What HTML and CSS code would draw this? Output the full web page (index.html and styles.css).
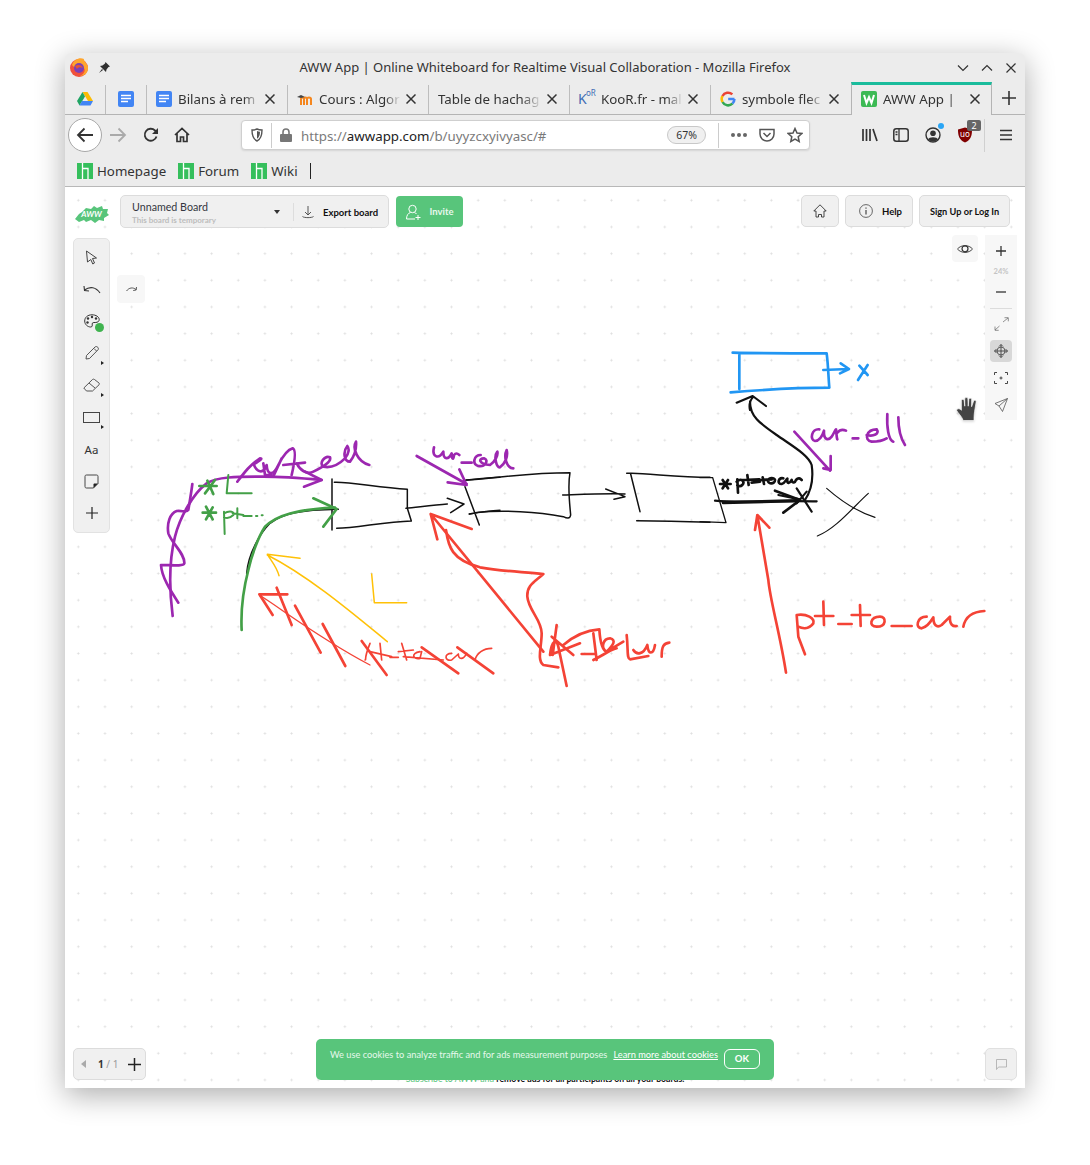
FILE: index.html
```html
<!DOCTYPE html>
<html lang="en">
<head>
<meta charset="utf-8">
<title>AWW App</title>
<link rel="stylesheet" href="styles.css">
</head>
<body>
<div class="window">
  <header class="titlebar">
    <div class="title-left">
      <svg class="ff" width="20" height="20" viewBox="0 0 20 20"><circle cx="10" cy="11" r="9" fill="#f0503c"/><path d="M3 8C5 2 11 0 15 2c-1 1 3 4 4 8 .6 5-3 9-8 9 5-2 6-7 3-9-2-2-6-1-8 1-1-1-2-2-3-3z" fill="#ffa52c"/><circle cx="10" cy="11" r="5" fill="#7b3fb8"/><path d="M6 9c3-2 7-1 8 2-2-1-5-1-6 1z" fill="#e8552f"/></svg>
      <svg class="pin" width="13" height="13" viewBox="0 0 13 13"><path d="M7.500 1 12 5.500 10.500 6 8.500 8.500 8 11 2 5 4.500 4.500 7 2.500zM4 8 1 12l4-3z" fill="#2f2f2f"/></svg>
    </div>
    <div class="title-text">AWW App | Online Whiteboard for Realtime Visual Collaboration - Mozilla Firefox</div>
    <div class="win-controls">
      <svg width="12" height="8" viewBox="0 0 12 8"><path d="M1 1.500l5 5 5-5" fill="none" stroke="#333" stroke-width="1.200"/></svg>
      <svg width="12" height="8" viewBox="0 0 12 8"><path d="M1 6.500l5-5 5 5" fill="none" stroke="#333" stroke-width="1.200"/></svg>
      <svg width="10" height="10" viewBox="0 0 10 10"><path d="M.5.500l9 9m0-9l-9 9" fill="none" stroke="#333" stroke-width="1.200"/></svg>
    </div>
  </header>

  <nav class="tabstrip">
    <div class="tab pinned pin-a">
      <svg width="16" height="15" viewBox="0 0 16 15"><path d="M5.500 1h5L16 10h-5z" fill="#fbbc04"/><path d="M5.500 1 0 10l2.500 4.500L8 5.500z" fill="#1fa463"/><path d="M2.500 14.500h11L16 10H5z" fill="#4285f4"/></svg>
    </div>
    <div class="tab pinned pin-b">
      <svg width="16" height="16" viewBox="0 0 16 16"><rect width="16" height="16" rx="2" fill="#4285f4"/><path d="M3 4.500h10M3 7.500h10M3 10.500h7" stroke="#fff" stroke-width="1.500"/></svg>
    </div>
    <div class="tab">
      <svg width="16" height="16" viewBox="0 0 16 16"><rect width="16" height="16" rx="2" fill="#4285f4"/><path d="M3 4.500h10M3 7.500h10M3 10.500h7" stroke="#fff" stroke-width="1.500"/></svg>
      <span class="tab-label">Bilans à rem</span>
      <svg class="tab-x" width="10" height="10" viewBox="0 0 10 10"><path d="M.5.500l9 9m0-9l-9 9" stroke="#333" stroke-width="1.500"/></svg>
    </div>
    <div class="tab">
      <svg width="16" height="16" viewBox="0 0 16 16"><path d="M4 14V8c0-2 3-2 3 0v6M7 8c0-2 3-2 3 0v6M10 8c0-2 4-2 4 0v6" fill="none" stroke="#f5871f" stroke-width="2"/><path d="M0 6l4-2 4 2-4 1z" fill="#444"/></svg>
      <span class="tab-label">Cours : Algor</span>
      <svg class="tab-x" width="10" height="10" viewBox="0 0 10 10"><path d="M.5.500l9 9m0-9l-9 9" stroke="#333" stroke-width="1.500"/></svg>
    </div>
    <div class="tab tab-nofav">
      <span class="tab-label">Table de hachag</span>
      <svg class="tab-x" width="10" height="10" viewBox="0 0 10 10"><path d="M.5.500l9 9m0-9l-9 9" stroke="#333" stroke-width="1.500"/></svg>
    </div>
    <div class="tab">
      <span class="koor-fav"><span class="koor-k">K</span><span class="koor-r">oR</span></span>
      <span class="tab-label">KooR.fr - mal</span>
      <svg class="tab-x" width="10" height="10" viewBox="0 0 10 10"><path d="M.5.500l9 9m0-9l-9 9" stroke="#333" stroke-width="1.500"/></svg>
    </div>
    <div class="tab">
      <svg width="16" height="16" viewBox="0 0 16 16"><path d="M14.500 8H8.200" fill="none" stroke="#4285f4" stroke-width="2.600"/><path d="M14.400 8a6.300 6.300 0 0 1-2 4.600" fill="none" stroke="#4285f4" stroke-width="2.600"/><path d="M12.400 12.600A6.300 6.300 0 0 1 2.500 11" fill="none" stroke="#34a853" stroke-width="2.600"/><path d="M2.500 11a6.300 6.300 0 0 1 0-6" fill="none" stroke="#fbbc05" stroke-width="2.600"/><path d="M2.500 5a6.300 6.300 0 0 1 9.800-1.600" fill="none" stroke="#ea4335" stroke-width="2.600"/></svg>
      <span class="tab-label">symbole flec</span>
      <svg class="tab-x" width="10" height="10" viewBox="0 0 10 10"><path d="M.5.500l9 9m0-9l-9 9" stroke="#333" stroke-width="1.500"/></svg>
    </div>
    <div class="tab tab-active">
      <svg width="16" height="16" viewBox="0 0 16 16"><rect width="16" height="16" rx="2" fill="#3cba54"/><path d="M3 4l2.500 8L8 6l2.500 6L13 4" fill="none" stroke="#fff" stroke-width="2"/></svg>
      <span class="tab-label">AWW App | </span>
      <svg class="tab-x" width="10" height="10" viewBox="0 0 10 10"><path d="M.5.500l9 9m0-9l-9 9" stroke="#333" stroke-width="1.500"/></svg>
    </div>
    <svg class="newtab" width="14" height="14" viewBox="0 0 14 14"><path d="M7 0v14M0 7h14" stroke="#333" stroke-width="1.600"/></svg>
  </nav>

  <div class="navbar">
    <div class="back-btn"><svg width="18" height="16" viewBox="0 0 18 16"><path d="M17 8H2M8.500 1.500 2 8l6.500 6.500" fill="none" stroke="#333" stroke-width="1.800"/></svg></div>
    <svg class="nav-fwd" width="18" height="16" viewBox="0 0 18 16"><path d="M1 8h15M9.500 1.500 16 8l-6.500 6.500" fill="none" stroke="#aaa" stroke-width="1.800"/></svg>
    <svg class="nav-reload" width="16" height="16" viewBox="0 0 16 16"><path d="M13.500 9.500A6 6 0 1 1 12 3.500L14 5.500" fill="none" stroke="#333" stroke-width="1.800"/><path d="M15 1v6H9z" fill="#333"/></svg>
    <svg class="nav-home" width="16" height="16" viewBox="0 0 16 16"><path d="M1 8 8 1.500 15 8M3 6.500V14.500H6.500V10H9.500V14.500H13V6.500" fill="none" stroke="#333" stroke-width="1.700"/></svg>
    <div class="urlbar">
      <svg class="url-shield" width="12" height="14" viewBox="0 0 12 14"><path d="M1 2c2 0 4-.5 5-1 1 .5 3 1 5 1 0 5-1 9-5 11C2 11 1 7 1 2z" fill="none" stroke="#555" stroke-width="1.400"/><path d="M6 3c1 .5 2 .7 3 .8 0 3-.7 5.500-3 7z" fill="#555"/></svg>
      <span class="url-sep"></span>
      <svg class="url-lock" width="12" height="14" viewBox="0 0 12 14"><rect y="6" width="12" height="8" rx="1" fill="#777"/><path d="M3 6.500V4a3 3 0 0 1 6 0v2.500" fill="none" stroke="#777" stroke-width="1.600"/></svg>
      <span class="url-text">https://<b class="url-host">awwapp.com</b>/b/uyyzcxyivyasc/#</span>
      <span class="zoom-pill">67%</span>
      <span class="url-sep url-sep-b"></span>
      <span class="url-dots"><i></i><i></i><i></i></span>
      <svg class="url-pocket" width="16" height="14" viewBox="0 0 16 14"><path d="M1 1.500h14V6a7 7 0 0 1-14 0z" fill="none" stroke="#555" stroke-width="1.500"/><path d="M4.500 5 8 8.500 11.500 5" fill="none" stroke="#555" stroke-width="1.500"/></svg>
      <svg class="url-star" width="16" height="16" viewBox="0 0 16 16"><path d="M8 1.500l2 4.500 4.800.5-3.600 3.200 1 4.800L8 12.100l-4.200 2.400 1-4.800L1.200 6.500 6 6z" fill="none" stroke="#555" stroke-width="1.500"/></svg>
    </div>
    <div class="nav-right">
      <svg class="ic-lib" width="16" height="14" viewBox="0 0 16 14"><path d="M1 1v12M4.500 1v12M8 1v12M11 1l4 12" stroke="#333" stroke-width="1.700" fill="none"/></svg>
      <svg class="ic-side" width="16" height="14" viewBox="0 0 16 14"><rect x=".8" y=".8" width="14.400" height="12.400" rx="2.500" fill="none" stroke="#333" stroke-width="1.500"/><path d="M6 1v12M2.500 4H4.500M2.500 6.500H4.500" stroke="#333" stroke-width="1.300"/></svg>
      <span class="ic-acct">
        <svg width="16" height="16" viewBox="0 0 16 16"><circle cx="8" cy="8" r="7" fill="none" stroke="#333" stroke-width="1.400"/><circle cx="8" cy="6.300" r="2.800" fill="#333"/><path d="M3 12.500c1-3 9-3 10 0-3 2.500-7 2.500-10 0z" fill="#333"/></svg>
        <i class="acct-dot"></i>
      </span>
      <span class="ic-ublock">
        <svg width="14" height="16" viewBox="0 0 14 16"><path d="M0 2.500 7 .5l7 2c0 6-1 10.500-7 13-6-2.500-7-7-7-13z" fill="#800000"/></svg>
        <span class="ub-text">uo</span>
        <span class="ub-badge">2</span>
      </span>
      <span class="nav-sep"></span>
      <svg class="ic-menu" width="14" height="12" viewBox="0 0 14 12"><path d="M1 1.500h12M1 6h12M1 10.500h12" stroke="#333" stroke-width="1.600"/></svg>
    </div>
  </div>

  <div class="bookmarks">
    <span class="bm"><svg class="mj" width="16" height="16" viewBox="0 0 16 16"><rect width="16" height="16" fill="#35bf5c"/><path d="M5.500 0v16M5.500 5.500H11v10.500" fill="none" stroke="#fff" stroke-width="1.300"/></svg>Homepage</span>
    <span class="bm"><svg class="mj" width="16" height="16" viewBox="0 0 16 16"><rect width="16" height="16" fill="#35bf5c"/><path d="M5.500 0v16M5.500 5.500H11v10.500" fill="none" stroke="#fff" stroke-width="1.300"/></svg>Forum</span>
    <span class="bm"><svg class="mj" width="16" height="16" viewBox="0 0 16 16"><rect width="16" height="16" fill="#35bf5c"/><path d="M5.500 0v16M5.500 5.500H11v10.500" fill="none" stroke="#fff" stroke-width="1.300"/></svg>Wiki</span>
    <span class="bm-sep"></span>
  </div>

  <main class="app">
    <svg class="canvas" viewBox="65 187 960 901" width="960" height="901">
      <g transform="translate(150 430) scale(.33333)" fill="none" stroke-linecap="round" stroke-linejoin="round">
        <g stroke="#9c27b0" stroke-width="8">
          <path d="M68 558C58 480 55 400 75 320 90 260 130 190 170 160 200 140 260 140 340 140 400 140 460 145 515 150"/>
          <path d="M465 125 515 150 462 170"/>
          <path d="M85 518C60 480 35 440 33 405 60 405 100 410 103 400 105 370 65 340 55 310 50 280 60 250 80 243 95 240 110 250 115 240 120 210 125 180 127 162"/>
          <path d="M262 155C285 125 300 105 330 85 345 85 310 100 312 105 320 125 340 135 350 105 352 135 368 140 385 105 395 85 410 60 428 55 440 60 432 105 425 135M372 135 395 85M340 100 345 135 365 135M400 105 465 98M440 100C450 120 470 135 490 125 520 110 545 95 540 82 525 75 505 100 520 110 545 115 570 100 585 85 598 70 598 55 592 48 578 65 582 95 600 95 612 80 620 60 618 35 606 55 622 95 658 105"/>
          <path d="M800 78 950 162M928 118 950 165 893 157"/>
        </g>
        <g stroke="#111" stroke-width="4.500">
          <path d="M546 147V300"/>
          <path d="M553 157C600 155 680 172 772 178V235L784 273C700 275 620 295 560 295"/>
          <path d="M768 235C800 232 850 225 892 222M892 205 942 222 902 248"/>
          <path d="M945 170 988 285M948 150C980 147 1020 143 1050 142M958 252C990 247 1020 243 1050 241"/>
          <path d="M290 430C295 370 330 310 360 280 400 250 450 240 565 238"/>
        </g>
        <g stroke="#43a047" stroke-width="8">
          <path d="M148 168H200M172 152 190 192M195 150 165 190"/>
          <path d="M235 135 230 190H305" stroke-width="6"/>
          <path d="M158 248H198M168 230 188 268M188 232 168 268"/>
          <path d="M222 245 224 312M222 250C240 240 255 245 250 255 240 265 230 265 222 262M262 235V265M248 250 280 255M280 258H305M318 258H322M335 256H338" stroke-width="6"/>
          <path d="M275 600C272 540 282 470 295 420 305 375 325 320 345 290 380 255 440 238 555 233"/>
          <path d="M490 205 560 237 520 290"/>
        </g>
        <g stroke="#ffc107" stroke-width="4.500">
          <path d="M712 635C620 560 480 440 352 375M450 385 352 373C365 395 380 410 387 437"/>
          <path d="M665 432 673 518H770"/>
        </g>
        <g stroke="#f44336" stroke-width="8">
          <path d="M328 493H412M328 493 368 555"/>
          <path d="M328 495C400 540 500 620 660 705" stroke-width="4"/>
          <path d="M380 473 425 585M435 527 512 668M518 582 586 708M635 633 710 735M815 652 925 730M922 652 1030 730"/>
          <path d="M660 640C640 690 650 690 645 690M690 640 695 690M660 665 725 680M720 682H745M755 640 770 690M745 665 790 660M810 665C780 670 790 690 810 685L815 665M760 680 880 690M905 670C880 670 885 695 905 690L925 672C925 690 940 690 950 670M975 690C980 670 1000 655 1025 655" stroke-width="5"/>
        </g>
      </g>
      <g transform="translate(410 340) scale(.33333)" fill="none" stroke-linecap="round" stroke-linejoin="round">
        <path stroke="#9c27b0" stroke-width="8" d="M72 322C65 350 85 360 100 335 100 360 115 360 125 340 125 358 130 362 132 345 138 338 142 340 148 345M155 368H185M212 345C192 345 185 372 205 378 225 382 238 360 222 355 205 355 205 372 240 375 255 365 265 345 262 335 250 350 260 385 270 382 285 370 295 350 290 330 280 350 290 385 310 385"/>
        <g stroke="#111" stroke-width="4.500">
          <path d="M170 420C250 415 350 398 480 398 472 440 480 500 482 525 480 538 470 535 460 530 380 515 280 510 205 517L178 522"/>
          <path d="M458 465C520 463 590 460 645 462M587 447 645 470 612 478"/>
          <path d="M650 400H665C720 400 800 412 900 412M662 402 690 515M680 542C750 542 850 545 900 547"/>
        </g>
        <g stroke="#f44336" stroke-width="8">
          <path d="M62 522 400 935M82 598 62 522 185 567"/>
          <path d="M108 570C115 620 125 660 210 682 280 695 340 695 400 702 375 725 350 735 352 770 355 810 395 840 395 880 395 920 380 960 400 975L445 982"/>
          <path d="M440 855 428 945M420 945C425 900 440 895 445 920L470 1038M420 945 510 910M425 890 490 945M460 915C500 880 540 870 568 868 570 900 575 930 590 935 610 915 620 900 600 895 580 895 570 925 590 935M550 960C580 945 600 930 620 925M515 942H555M550 880 560 960M590 935 640 905M650 885C655 930 650 955 660 958L715 948M670 930C680 945 700 945 712 915 715 945 730 945 735 915M755 950C755 920 760 910 778 908"/>
        </g>
      </g>
      <g transform="translate(700 340) scale(.33333)" fill="none" stroke-linecap="round" stroke-linejoin="round">
        <g stroke="#2196f3" stroke-width="8">
          <path d="M98 38C200 40 300 40 380 40 385 80 385 110 388 143 300 143 180 150 92 157M118 45V147"/>
          <path d="M370 90 445 87M422 70 447 87 420 100M478 77 503 105M503 75 474 120"/>
        </g>
        <g stroke="#111" stroke-width="6.500">
          <path d="M150 210C145 190 155 175 160 170M110 188 158 168 198 198"/>
          <path d="M150 185C150 230 180 250 230 285 280 320 325 345 335 375 340 410 335 450 315 480"/>
          <path d="M45 482C120 490 240 480 350 484"/>
          <path d="M70 488 290 482" stroke-width="10"/>
          <path d="M225 452 300 480 250 518" stroke-width="8"/>
          <path d="M235 465 300 478M290 445 335 515M320 455 290 490"/>
          <path d="M60 432H92M68 420 84 445M84 420 68 445M112 418 114 458M110 425C125 412 135 425 127 435 122 440 115 438 112 436M142 405 146 435M128 420 178 418M155 428 180 425M188 412 192 432M176 420 215 418M205 420C200 432 225 435 225 420 222 412 208 412 205 420M250 415C235 412 230 432 245 432 255 430 258 418 262 416 260 432 268 432 275 420 278 432 285 428 288 420 295 412 300 415 305 420" stroke-width="8"/>
          <path d="M38 413 78 548 0 545M0 413H38" stroke-width="4"/>
          <path d="M380 445C420 480 470 515 525 532M505 460C460 500 410 565 352 588" stroke-width="3.500"/>
        </g>
        <g stroke="#9c27b0" stroke-width="8">
          <path d="M283 275 390 392M392 348V390L370 385"/>
          <path d="M358 268C335 265 328 300 345 303 360 303 368 285 372 272 370 300 385 303 395 290 402 280 405 270 408 268 410 285 410 295 412 298M412 278C420 268 430 268 438 272M458 295H475M530 268C500 268 490 300 515 305 535 305 552 300 560 295M500 285C520 290 540 282 530 268M562 222C560 260 565 300 580 305M595 232C595 270 605 300 615 315"/>
        </g>
        <g stroke="#f44336" stroke-width="8">
          <path d="M258 998C240 880 210 780 205 720L172 525M165 570 172 525 208 563"/>
          <path d="M290 825 295 890 315 943M290 825C320 820 345 835 340 850 325 870 305 865 295 860M370 785 372 855M345 828H400M415 852H455M480 795 482 858M455 825H510M540 830C510 830 505 860 530 860 560 860 560 830 540 830M575 858H635M680 830C650 830 645 865 665 865 685 860 695 840 700 832 700 855 710 865 725 855 735 845 745 835 750 830 748 855 760 860 770 858M790 860C795 835 810 815 853 813"/>
        </g>
      </g>
    </svg>

    <header class="app-head">
      <div class="logo">
        <svg class="logo-blob" width="34" height="18" viewBox="0 0 34 18"><path d="M0 14 4 9 7 7 11 3 16 4 19 1 22 3 27 1 28 4 33 4 32 8 34 10 29 13 29 16 24 15 20 18 16 15 11 17 9 15 4 17z" fill="#58c57b"/></svg>
        <span class="logo-text">AWW</span>
      </div>
      <div class="board-box">
        <div class="board-name">
          <span class="board-title">Unnamed Board</span>
          <span class="board-sub">This board is temporary</span>
        </div>
        <i class="caret"></i>
        <div class="export">
          <svg width="12" height="13" viewBox="0 0 12 13"><path d="M6 0v8.500M3 6l3 3 3-3M.5 10.500C2 12 10 12 11.500 10.500" fill="none" stroke="#444" stroke-width=".9"/></svg>
          <span>Export board</span>
        </div>
      </div>
      <button class="invite">
        <svg width="16" height="16" viewBox="0 0 16 16"><circle cx="6.500" cy="5" r="3.700" fill="none" stroke="#fff"/><path d="M.5 15c0-4 2-6 4-6.500M8.500 8.500c.7.200 1.500.7 2 1.500M.5 15H9M12 11v5M9.500 13.500h5" fill="none" stroke="#fff"/></svg>
        <span>Invite</span>
      </button>
      <div class="head-right">
        <button class="head-btn btn-home"><svg width="14" height="14" viewBox="0 0 14 14"><path d="M.8 7 7 .8 13.200 7H11V13H8.500V10.500H5.500V13H3V7z" fill="none" stroke="#333" stroke-width=".9"/></svg></button>
        <button class="head-btn btn-help"><svg width="14" height="14" viewBox="0 0 14 14"><circle cx="7" cy="7" r="6.400" fill="none" stroke="#444" stroke-width=".8"/><path d="M7 6v4.500M7 3.500v1.200" stroke="#222"/></svg><span>Help</span></button>
        <button class="head-btn btn-sign"><span>Sign Up or Log In</span></button>
      </div>
    </header>

    <aside class="toolbar">
      <div class="tool"><svg width="13" height="15" viewBox="0 0 13 15"><path d="M1.500 1 11.500 8 7.500 8.500 9.500 13 7.800 14 5.800 9.500 2.500 12z" fill="none" stroke="#444"/></svg></div>
      <div class="tool"><svg width="18" height="9" viewBox="0 0 18 9"><path d="M17 8C13 2 7 1 1.500 5M1 1l.5 4.500L6 6" fill="none" stroke="#333" stroke-width="1.100"/></svg></div>
      <div class="tool"><svg width="16" height="14" viewBox="0 0 16 14"><path d="M8 .8C3.500.8.700 3.500.7 7c0 3.500 3 6 6 6 2 0 1.500-2 1.500-3 0-1.500 1-1.500 3-1.500 3 0 4-1.500 4-3C15.200 3 12 .8 8 .8z" fill="none" stroke="#333"/><circle cx="4" cy="4.500" r="1.200" fill="#333"/><circle cx="8" cy="3" r="1.200" fill="#333"/><circle cx="12" cy="4.500" r="1.200" fill="#333"/><circle cx="3.500" cy="8.500" r="1.200" fill="#333"/></svg><i class="color-dot"></i></div>
      <div class="tool"><svg width="14" height="14" viewBox="0 0 14 14"><path d="M1 13 1.500 9.500 10 1c1-.8 2-.5 2.800.3.800 1 .8 2 0 2.700L4.500 12.500zM9 2.500 11.500 5" fill="none" stroke="#444" stroke-width=".9"/></svg><i class="more"></i></div>
      <div class="tool"><svg width="17" height="14" viewBox="0 0 17 14"><path d="M.8 10 9.500 1.500C10 1 10.800 1 11.500 1.500L16 5C16.500 5.500 16.500 6.200 16 6.800L9.500 13H3.500zM6 5 12 10" fill="none" stroke="#444" stroke-width=".9"/></svg><i class="more"></i></div>
      <div class="tool"><span class="rect-ic"></span><i class="more"></i></div>
      <div class="tool tool-text">Aa</div>
      <div class="tool"><svg width="15" height="15" viewBox="0 0 15 15"><path d="M9.500 14H2.500C1.500 14 1 13.500 1 12.500V2.500C1 1.500 1.500 1 2.500 1H12.500C13.500 1 14 1.500 14 2.500V9.500z" fill="none" stroke="#333" stroke-width=".9"/><path d="M14 9.500H10.500C10 9.500 9.500 10 9.500 10.500V14z" fill="#222"/></svg></div>
      <div class="tool"><svg width="12" height="12" viewBox="0 0 12 12"><path d="M6 0v12M0 6h12" stroke="#222" stroke-width="1.200"/></svg></div>
    </aside>

    <button class="redo"><svg width="11" height="6" viewBox="0 0 11 6"><path d="M.5 5C3 1.500 7 1 10 3.500M10.500 1l-.3 3-3 .5" fill="none" stroke="#333" stroke-width=".8"/></svg></button>

    <button class="eye"><svg width="16" height="10" viewBox="0 0 16 10"><path d="M.5 5C4 .5 12 .5 15.500 5 12 9.500 4 9.500.5 5z" fill="none" stroke="#333" stroke-width=".9"/><circle cx="8" cy="4.800" r="3" fill="none" stroke="#333" stroke-width="1.200"/></svg></button>

    <aside class="zoombar">
      <div class="zb zb-plus"><svg width="10" height="10" viewBox="0 0 10 10"><path d="M5 0v10M0 5h10" stroke="#333" stroke-width="1.300"/></svg></div>
      <div class="zb-pct">24%</div>
      <div class="zb zb-minus"><svg width="10" height="2" viewBox="0 0 10 2"><path d="M0 1h10" stroke="#333" stroke-width="1.300"/></svg></div>
      <div class="zb-line"></div>
      <div class="zb"><svg width="15" height="14" viewBox="0 0 15 14"><path d="M9 5 14 1M10.500 .7H14.300V4.300M5.500 9 1 13M1 9.500V13.300H4.700" fill="none" stroke="#666" stroke-width=".7"/></svg></div>
      <div class="zb zb-on"><svg width="14" height="14" viewBox="0 0 14 14"><path d="M7 .5v13M.5 7h13M5 2.500 7 .5l2 2M5 11.500l2 2 2-2M2.500 5 .5 7l2 2M11.500 5l2 2-2 2" fill="none" stroke="#333" stroke-width=".8"/><circle cx="7" cy="7" r="4" fill="none" stroke="#333" stroke-width=".7"/></svg></div>
      <div class="zb"><svg width="14" height="12" viewBox="0 0 14 12"><path d="M.5 3V.5H3M11 .5h2.500V3M13.500 9v2.500H11M3 11.500H.5V9M7 4.500v3M5.500 6h3" fill="none" stroke="#333" stroke-width=".9"/></svg></div>
      <div class="zb"><svg width="14" height="14" viewBox="0 0 14 14"><path d="M13.500.5 1 5.500 5 8 8.500 13.500zM13.500.5 5 8" fill="none" stroke="#555" stroke-width=".8"/></svg></div>
    </aside>

    <svg class="hand" width="21" height="24" viewBox="0 0 17.500 23.500" preserveAspectRatio="none"><path d="M6 23C5 19 1 15 .5 13 1 11 3 11 4.500 13V3.500C4.500 2 6.500 2 6.800 3.500L7.300 9V1.700C7.500.2 9.700.2 9.900 1.700L10.200 9 10.700 2.300C11 .8 13 1 13 2.500L13 9.500 14.700 4C15.200 2.700 17 3.200 16.800 4.700L15.500 14C15 18 15 20 15 23z" fill="#444" stroke="#fff" stroke-width=".6"/></svg>

    <div class="pager">
      <i class="pager-prev"></i>
      <span class="pager-num"><b>1</b> / 1</span>
      <svg width="13" height="13" viewBox="0 0 13 13"><path d="M6.500 0v13M0 6.500h13" stroke="#222" stroke-width="1.500"/></svg>
    </div>

    <button class="chat"><svg width="11" height="11" viewBox="0 0 11 11"><path d="M.5.500h10v7.500H2.500L.5 10.500z" fill="none" stroke="#aaa" stroke-width=".8"/></svg></button>

    <p class="subscribe">Subscribe to AWW and <b>remove ads for all participants on all your boards.</b></p>
    <div class="cookie">
      <span>We use cookies to analyze traffic and for ads measurement purposes</span>
      <a class="cookie-link">Learn more about cookies</a>
      <button class="cookie-ok">OK</button>
    </div>
  </main>
</div>
</body>
</html>
```

FILE: styles.css
```css
* { box-sizing: border-box; }
html, body { margin: 0; background: #fff; }
body { height: 1165px; padding: 53px 0 0 65px; overflow: hidden; font-family: "Noto Sans", sans-serif; color: #2f2f2f; }
button { font: inherit; padding: 0; margin: 0; }

.window { width: 960px; height: 1035px; display: flex; flex-direction: column; background: #ececec; border-radius: 6px 6px 0 0; box-shadow: 0 7px 30px rgba(0,0,0,.33); overflow: hidden; }

.titlebar { height: 29px; flex: none; display: flex; align-items: center; position: relative; }
.title-left { display: flex; align-items: center; padding-left: 4px; }
.pin { margin-left: 9px; margin-top: -1px; }
.ff { margin-top: -1px; }
.title-text { position: absolute; left: 0; right: 0; top: 5px; text-align: center; font-size: 13px; line-height: 18px; color: #333; }
.win-controls { margin-left: auto; display: flex; align-items: center; gap: 12px; padding-right: 9px; }
.win-controls svg:last-child { margin-left: 1px; }

.tabstrip { height: 33px; flex: none; display: flex; border-bottom: 1px solid #b4b4b4; align-items: stretch; }
.tab { width: 141px; flex: none; display: flex; align-items: center; padding: 0 0 2px 9px; border-left: 1px solid #bdbdbd; margin: 3px 0 0; height: 29px; position: relative; }
.tab-label { margin-left: 6px; font-size: 13.3px; line-height: 18px; width: 82px; overflow: hidden; white-space: nowrap; color: #333; -webkit-mask-image: linear-gradient(90deg,#000 80%,transparent); mask-image: linear-gradient(90deg,#000 80%,transparent); }
.tab-x { margin-left: 5px; flex: none; }
.tab-nofav .tab-label { margin-left: 0; width: 104px; }
.pinned { justify-content: center; padding: 0 0 2px; }
.pin-a { width: 40px; border-left: 0; }
.pin-b { width: 41px; }
.tab-active { width: 141px; height: 33px; margin: 0 0 -1px; padding: 0 0 2px 9px; border: 1px solid #b4b4b4; border-top: 3px solid #1abc9c; border-bottom: 0; background: #ececec; }
.tab-active + .newtab { margin: 9px 0 0 10px; }
.koor-fav { width: 16px; height: 16px; position: relative; flex: none; color: #3f6db5; display: block; }
.koor-k { position: absolute; left: -1px; top: -1px; font-size: 14px; line-height: 18px; }
.koor-r { position: absolute; left: 7px; top: -4px; font-size: 8px; line-height: 12px; }

.navbar { height: 40px; flex: none; display: flex; align-items: center; position: relative; padding-left: 3px; }
.back-btn { width: 34px; height: 34px; border-radius: 50%; background: #fff; border: 1px solid #a8a8a8; display: flex; align-items: center; justify-content: center; flex: none; }
.nav-fwd { margin-left: 7px; }
.nav-reload { margin-left: 16px; }
.nav-home { margin-left: 15px; }
.urlbar { margin-left: 51px; width: 569px; height: 30px; background: #fff; border: 1px solid #cfcfcf; border-radius: 4px; display: flex; align-items: center; box-shadow: 0 1px 2px rgba(0,0,0,.1); padding-left: 9px; }
.url-sep { width: 1px; height: 25px; background: #ccc; margin-left: 8px; flex: none; }
.url-lock { margin-left: 8px; }
.url-text { margin-left: 9px; width: 366px; font-size: 13.3px; line-height: 18px; padding-top: 1px; color: #7a7a7a; white-space: nowrap; }
.url-host { font-weight: 400; color: #222; }
.zoom-pill { width: 39px; height: 18px; border: 1px solid #c8c8c8; border-radius: 9px; background: #f0f0f0; font-size: 10.5px; line-height: 16px; text-align: center; color: #333; flex: none; }
.url-sep-b { margin-left: 12px; }
.url-dots { margin-left: 12px; display: flex; gap: 2px; }
.url-dots i { width: 4px; height: 4px; border-radius: 50%; background: #666; display: block; }
.url-pocket { margin-left: 12px; }
.url-star { margin-left: 12px; }
.nav-right { position: absolute; left: 796px; top: 0; height: 40px; width: 164px; display: flex; align-items: center; padding-left: 1px; }
.ic-side { margin-left: 15px; }
.ic-acct { margin-left: 16px; position: relative; display: block; height: 16px; }
.ic-acct svg { display: block; }
.acct-dot { position: absolute; width: 6px; height: 6px; border-radius: 50%; background: #2aa5f5; top: -4px; right: -3px; }
.ic-ublock { margin-left: 17px; position: relative; display: block; height: 16px; }
.ic-ublock svg { display: block; }
.ub-text { position: absolute; left: 2px; top: 2px; width: 10px; text-align: center; font-size: 8px; line-height: 10px; color: #fff; }
.ub-badge { position: absolute; left: 9px; top: -7px; width: 14px; height: 11px; background: #666; color: #fff; font-size: 9px; line-height: 11px; text-align: center; border-radius: 2px; }
.nav-sep { width: 1px; height: 33px; background: #d0d0d0; margin-left: 12px; }
.ic-menu { margin-left: 14px; }

.bookmarks { height: 32px; flex: none; display: flex; align-items: center; padding: 0 0 0 12px; border-bottom: 1px solid #b8b8b8; font-size: 13.3px; color: #333; }
.bm { display: flex; align-items: center; margin-right: 12px; }
.mj { margin-right: 4px; }
.bm-sep { width: 1px; height: 16px; background: #222; margin-left: 0; }

.app { position: relative; flex: 1; background-color: #fff; background-image: radial-gradient(circle, #dedede 0, #dedede .8px, transparent 1.3px); background-size: 26.667px 26.667px; overflow: hidden; font-family: Lato, sans-serif; }
.canvas { position: absolute; left: 0; top: 0; }

.app-head { position: relative; display: flex; align-items: flex-start; padding: 8px 15px 0 10px; }
.logo { width: 33px; height: 18px; margin-top: 10px; position: relative; display: flex; align-items: center; justify-content: center; flex: none; }
.logo-blob { position: absolute; left: 0; top: 0; }
.logo-text { position: relative; font-size: 8px; font-weight: 700; font-style: italic; color: #fff; line-height: 1; }
.board-box { margin-left: 12px; width: 269px; height: 33px; background: #f0f0f0; border: 1px solid #dcdcdc; border-radius: 5px; display: flex; align-items: center; padding-left: 11px; }
.board-name { display: flex; flex-direction: column; width: 140px; }
.board-title { font-size: 10.7px; line-height: 15px; color: #34373f; margin-top: 2px; }
.board-sub { font-size: 8px; line-height: 12px; font-weight: 700; color: #bdbdbd; }
.caret { width: 0; height: 0; border: 3.5px solid transparent; border-top: 4px solid #333; border-bottom: 0; margin-left: 2px; }
.export { display: flex; align-items: center; margin-left: 13px; padding: 1px 0 0 8px; border-left: 1px solid #ddd; height: 18px; gap: 9px; font-size: 9.5px; font-weight: 700; color: #111; }
.invite { margin-left: 7px; margin-top: 1px; width: 67px; height: 31px; background: #58c57b; border: 0; border-radius: 4px; display: flex; align-items: center; justify-content: center; gap: 8px; color: #e8f8ed; font-size: 9.5px; font-weight: 700; }
.head-right { margin-left: auto; display: flex; gap: 6px; }
.head-btn { height: 32px; background: #f0f0f0; border: 1px solid #dcdcdc; border-radius: 5px; display: flex; align-items: center; justify-content: center; font-size: 9.5px; font-weight: 700; color: #111; }
.btn-home { width: 38px; }
.btn-help { width: 68px; gap: 9px; padding-left: 3px; }
.btn-sign { width: 91px; font-size: 9.2px; }

.toolbar { position: absolute; left: 8px; top: 51px; width: 37px; height: 295px; padding-top: 2px; background: #f0f0f0; border: 1px solid #e2e2e2; border-radius: 5px; display: flex; flex-direction: column; }
.tool { height: 32px; flex: none; display: flex; align-items: center; justify-content: center; position: relative; }
.tool-text { font-size: 11.5px; color: #333; font-family: "Noto Sans", sans-serif; }
.rect-ic { width: 17px; height: 11px; border: 1px solid #444; display: block; }
.more { position: absolute; right: 5px; bottom: 4px; width: 0; height: 0; border: 2px solid transparent; border-left: 3px solid #222; border-right: 0; }
.color-dot { position: absolute; right: 5px; bottom: 5px; width: 9px; height: 9px; border-radius: 50%; background: #3fb34f; }

.redo { position: absolute; left: 52px; top: 88px; width: 28px; height: 28px; background: #f7f7f7; border: 0; border-radius: 4px; display: flex; align-items: center; justify-content: center; }
.eye { position: absolute; left: 887px; top: 48px; width: 26px; height: 27px; background: #f7f7f7; border: 0; border-radius: 4px; display: flex; align-items: center; justify-content: center; }

.zoombar { position: absolute; left: 920px; top: 48px; width: 32px; height: 185px; background: #f7f7f7; display: flex; flex-direction: column; align-items: center; padding-top: 5px; }
.zb { width: 22px; height: 22px; display: flex; align-items: center; justify-content: center; flex: none; margin-bottom: 5px; border-radius: 4px; }
.zb-plus { margin-bottom: 0; }
.zb-pct { font-size: 7.5px; font-weight: 700; color: #c4c4c4; line-height: 16px; height: 16px; margin-top: 2px; }
.zb-minus { margin-top: 1px; margin-bottom: 0; }
.zb-line { width: 22px; height: 1px; background: #dcdcdc; margin: 5px 0 4px; flex: none; }
.zb-on { background: #d8d8d8; }

.hand { position: absolute; left: 891px; top: 210px; filter: drop-shadow(0 1px 1px rgba(0,0,0,.15)); }

.pager { position: absolute; left: 8px; top: 861px; width: 73px; height: 32px; background: #f0f0f0; border: 1px solid #dcdcdc; border-radius: 5px; display: flex; align-items: center; padding-left: 7px; font-family: "Noto Sans", sans-serif; font-size: 10px; color: #9a9a9a; }
.pager-prev { width: 0; height: 0; border: 4px solid transparent; border-right: 5px solid #aaa; border-left: 0; }
.pager-num { margin-left: 12px; margin-right: 10px; white-space: nowrap; }
.pager-num b { color: #333; font-weight: 700; }
.chat { position: absolute; left: 920px; top: 861px; width: 32px; height: 32px; background: #f0f0f0; border: 1px solid #e0e0e0; border-radius: 5px; display: flex; align-items: center; justify-content: center; }

.subscribe { position: absolute; left: 0; right: 0; top: 886px; margin: 0; text-align: center; font-size: 8.66px; line-height: 12px; color: #58c57b; }
.subscribe b { color: #111; }
.cookie { position: absolute; left: 251px; top: 852px; width: 458px; height: 41px; background: #58c57b; border-radius: 5px; display: flex; align-items: flex-start; padding: 10px 14px 0; font-size: 9.25px; line-height: 12px; color: #e6f8ec; white-space: nowrap; }
.cookie-link { margin-left: 6px; color: #fff; text-decoration: underline; }
.cookie-ok { margin-left: 6px; width: 36px; height: 20px; flex: none; background: transparent; border: 1px solid #fff; border-radius: 6px; color: #fff; font-size: 9.5px; font-weight: 700; }
```
